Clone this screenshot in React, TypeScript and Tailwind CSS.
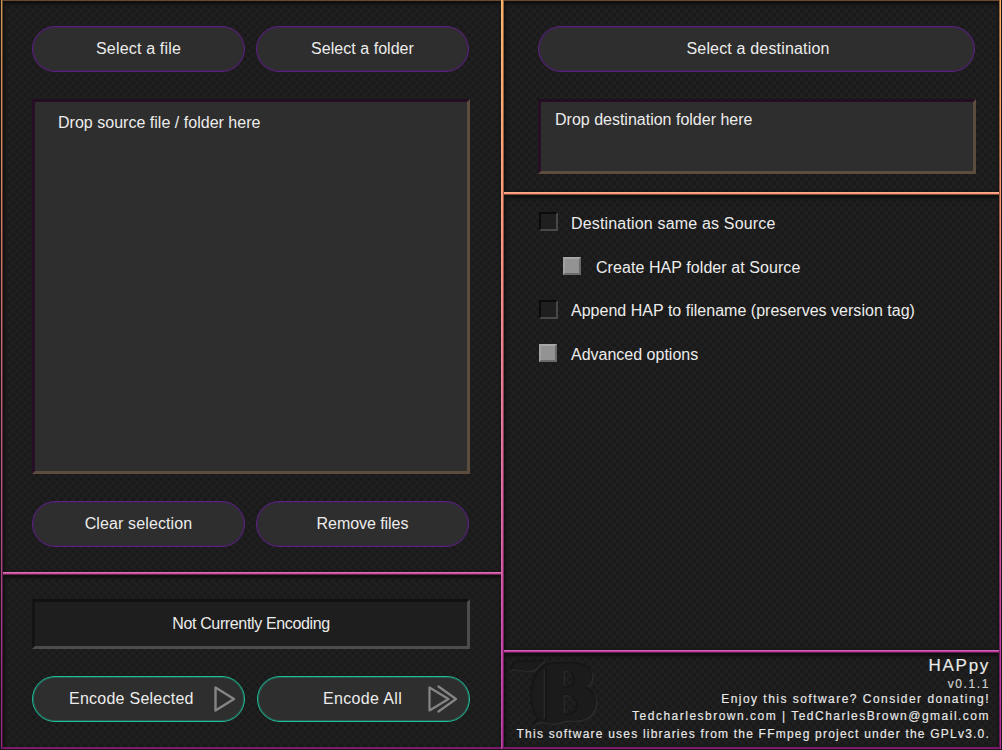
import React from "react";

const weave =
  "bg-[#1f1f1f] bg-[radial-gradient(circle_at_25%_25%,#191919_0_1.2px,transparent_2.8px),radial-gradient(circle_at_75%_75%,#191919_0_1.2px,transparent_2.8px)] bg-[length:8px_8px]";

function Panel({ className = "", children }: { className?: string; children?: React.ReactNode }) {
  return (
    <section className={`${weave} shadow-[inset_0_3px_3px_#101010,inset_2px_0_3px_#141414] ${className}`}>
      {children}
    </section>
  );
}

function Pill({
  children,
  tone = "border-[#5b2180] shadow-[inset_0_0_0_1px_#3c2549]",
  className = "",
}: {
  children: React.ReactNode;
  tone?: string;
  className?: string;
}) {
  return (
    <button className={`h-[46px] rounded-[23px] border bg-[#2e2e2e] text-center ${tone} ${className}`}>
      {children}
    </button>
  );
}

function Rule() {
  return <div className="h-[3px] shrink-0 border-b border-black/50 border-t border-t-white/20" />;
}

function Check({ on = false }: { on?: boolean }) {
  return on ? (
    <span className="h-[18px] w-[18px] shrink-0 border-2 border-t-[#a8a8a8] border-l-[#a0a0a0] border-r-[#6a6a6a] border-b-[#6a6a6a] bg-[#939393]" />
  ) : (
    <span className="h-[19px] w-[19px] shrink-0 border-2 border-t-[#0b0b0b] border-l-[#0b0b0b] border-r-[#484848] border-b-[#484848] bg-[#1f1f1f]" />
  );
}

function Option({
  label,
  on,
  className = "",
  textClass,
}: {
  label: string;
  on?: boolean;
  className?: string;
  textClass: string;
}) {
  return (
    <label className={`flex h-[43.7px] items-center ${className}`}>
      <span className="flex w-[32px]">
        <Check on={on} />
      </span>
      <span className={textClass}>{label}</span>
    </label>
  );
}

function Emblem() {
  const shape = (
    <>
      <path d="M8 16c1-4 3-6 6-7 8-1 17 1 26-1-5 3-7 8-12 9-7 1-13-2-20-1z" />
      <path d="M41 13c5-3 11-2 18-2 9-1 17-1 23 3 8 5 8 15-1 21 9 3 12 10 10 19-3 10-12 14-23 13-7-1-12 3-19 3-5 0-10-4-17 0 1-3 3-3 5-3-12-9-13-40 4-54zM39 17v51h4V16zM59 17v18c7 1 12-2 12-8s-5-11-12-10zM59 42v20c8 2 15-2 15-9s-6-13-15-11z" />
    </>
  );
  return (
    <svg className="absolute top-0 left-0" width="110" height="90" viewBox="0 0 110 90" fillRule="evenodd">
      <g fill="none" stroke="#292929" strokeWidth="2.4" transform="translate(.8 .8)">
        {shape}
      </g>
      <g fill="none" stroke="#161616" strokeWidth="2.4" transform="translate(-.8 -.8)">
        {shape}
      </g>
      <g fill="#1b1b1b">{shape}</g>
    </svg>
  );
}

export default function App() {
  return (
    <main className="h-[750px] w-[1002px] overflow-hidden bg-[#171717] pb-[1px] pl-[1px] pr-[1px] font-['Liberation_Sans',Arial,sans-serif] text-[16px] text-[#ececec]">
      <div className="flex h-[749px] bg-[linear-gradient(to_bottom,#f6ae62_0%,#fa9672_26%,#d9609a_65%,#c03aa0_87%,#a92a92_100%)]">
        <div className="w-[2px] shrink-0 border-r border-black/50 bg-black/15" />
        <div className="flex w-[498px] shrink-0 flex-col">
          <div className="h-px shrink-0 bg-[#6b4a30]" />
          <Panel className="flex h-[571px] shrink-0 flex-col px-[29px] pt-[25px]">
            <div className="grid w-[437px] grid-cols-[213px_213px] gap-[11px]">
              <Pill className="tracking-[0.17px]">Select a file</Pill>
              <Pill className="tracking-[0.04px]">Select a folder</Pill>
            </div>
            <div className="mt-[27px] h-[375px] w-[438px] border-[3px] border-t-[#230d22] border-l-[#270f26] border-r-[#5c4c3e] border-b-[#5c4c3e] bg-[#2e2e2e] px-[23px] pt-[9px] tracking-[0.02px]">
              Drop source file / folder here
            </div>
            <div className="mt-[27px] grid grid-cols-[213px_213px] gap-[11px]">
              <Pill className="tracking-[0.12px]">Clear selection</Pill>
              <Pill className="tracking-[-0.06px]">Remove files</Pill>
            </div>
          </Panel>
          <Rule />
          <Panel className="h-[172px] shrink-0 px-[29px] pt-[24px]">
            <div className="h-[50px] w-[438px] border-[3px] border-t-[#111] border-l-[#131313] border-r-[#4c4c4c] border-b-[#4c4c4c] bg-[#1e1e1e] pt-[10px] text-center tracking-[-0.36px]">
              Not Currently Encoding
            </div>
            <div className="mt-[27px] grid grid-cols-[213px_213px] gap-[12px]">
              <Pill tone="border-[#20bd9a] shadow-[inset_0_0_0_1px_#27594e]" className="flex items-center pl-[36px]">
                <span className="w-[126px] text-left tracking-[0.25px] whitespace-nowrap">Encode Selected</span>
                <svg
                  className="ml-[18px]"
                  width="24"
                  height="28"
                  viewBox="0 0 24 28"
                  fill="none"
                  stroke="#858585"
                  strokeWidth="2.4"
                  strokeLinejoin="round"
                >
                  <path d="M2.5 2.5v23L21 14z" />
                </svg>
              </Pill>
              <Pill tone="border-[#20bd9a] shadow-[inset_0_0_0_1px_#27594e]" className="flex items-center pl-[65px]">
                <span className="w-[80px] text-left tracking-[0.35px] whitespace-nowrap">Encode All</span>
                <svg
                  className="ml-[24px]"
                  width="32"
                  height="28"
                  viewBox="0 0 32 28"
                  fill="none"
                  stroke="#858585"
                  strokeWidth="2.2"
                  strokeLinecap="round"
                  strokeLinejoin="round"
                >
                  <path d="M2.5 2.5v23L21.5 14zM11.5 1.5L29 14 11.5 26.5" />
                </svg>
              </Pill>
            </div>
          </Panel>
          <div className="h-[2px] bg-[#7d196c]" />
        </div>
        <div className="w-[3px] shrink-0 border-r border-black/40 border-l border-l-white/15" />
        <div className="flex w-[495px] shrink-0 flex-col">
          <div className="h-px shrink-0 bg-[#6b4a30]" />
          <Panel className="h-[191px] shrink-0 pl-[34px] pt-[25px]">
            <Pill className="block w-[437px] pr-[3px] pl-[6px] tracking-[0.17px]">Select a destination</Pill>
            <div className="mt-[27px] h-[75px] w-[438px] border-[3px] border-t-[#230d22] border-l-[#270f26] border-r-[#5c4c3e] border-b-[#5c4c3e] bg-[#2e2e2e] px-[14px] pt-[6px]">
              Drop destination folder here
            </div>
          </Panel>
          <Rule />
          <Panel className="h-[455px] shrink-0 pl-[35px] pt-[5px]">
            <Option label="Destination same as Source" textClass="pt-[4px] tracking-[0.17px]" />
            <Option label="Create HAP folder at Source" on className="ml-[24px]" textClass="pl-px pt-[4px] tracking-[0.07px]" />
            <Option label="Append HAP to filename (preserves version tag)" textClass="pt-[4px] tracking-[0.02px]" />
            <Option label="Advanced options" on textClass="pt-[4px]" />
          </Panel>
          <Rule />
          <Panel className="relative h-[94px] shrink-0 pr-[9px] text-right text-[12px] whitespace-nowrap">
            <Emblem />
            <div className="relative pt-[2px] [-webkit-text-stroke:0.2px_#dcdcdc]">
              <h1 className="text-[17px] leading-[22px] tracking-[1.7px]">HAPpy</h1>
              <p className="h-[13px] leading-[14px] tracking-[1.6px] text-[#c9c9c9]">v0.1.1</p>
              <p className="h-[18px] leading-[18px] tracking-[1.47px]">Enjoy this software? Consider donating!</p>
              <p className="h-[17px] leading-[17px] tracking-[1.49px]">Tedcharlesbrown.com | TedCharlesBrown@gmail.com</p>
              <p className="h-[18px] leading-[18px] tracking-[1.21px]">
                This software uses libraries from the FFmpeg project under the GPLv3.0.
              </p>
            </div>
          </Panel>
          <div className="h-[2px] bg-[#7d196c]" />
        </div>
        <div className="w-[2px] shrink-0 border-l border-black/40" />
      </div>
    </main>
  );
}
